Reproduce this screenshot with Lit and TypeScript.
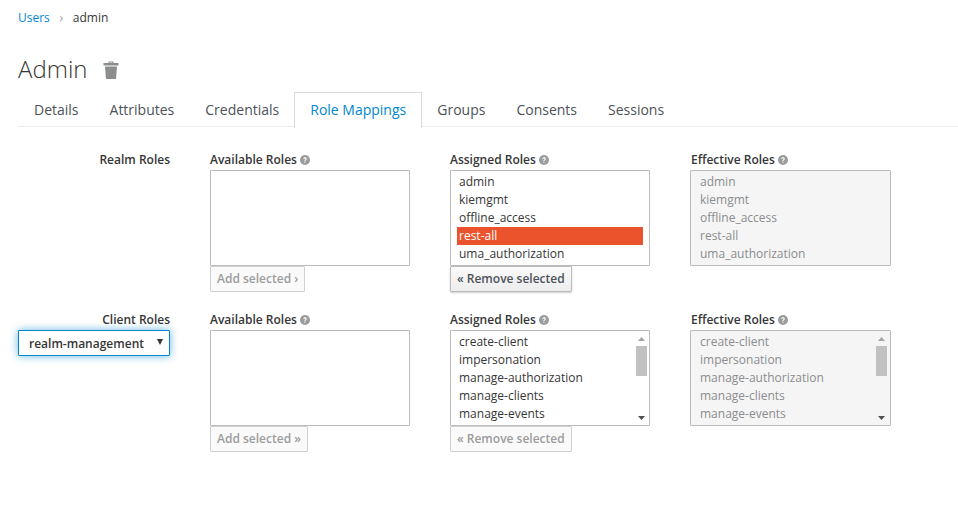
import { LitElement, css, html, nothing } from "lit";
import { customElement } from "lit/decorators.js";

const TABS = ["Details", "Attributes", "Credentials", "Role Mappings", "Groups", "Consents", "Sessions"];
const REALM = ["admin", "kiemgmt", "offline_access", "rest-all", "uma_authorization"];
const CLIENT = ["create-client", "impersonation", "manage-authorization", "manage-clients", "manage-events"];

@customElement("app-root")
export class AppRoot extends LitElement {
    static styles = css`
        :host {
            display: block;
            width: 958px;
            height: 518px;
            overflow: hidden;
            background: #fff;
            color: #363636;
            font-family: "Open Sans", sans-serif;
            font-size: 12px;
            line-height: 18px;
        }
        .crumbs {
            display: flex;
            align-items: center;
            height: 18px;
            padding: 9px 0 0 18px;
        }
        .crumbs a {
            color: #0088ce;
        }
        .crumbs .sep {
            width: 23px;
            text-align: center;
            color: #9c9c9c;
            font-size: 12px;
        }
        h1 {
            display: flex;
            align-items: center;
            margin: 0;
            padding: 24px 0 0 18px;
            height: 36px;
            font-size: 24px;
            font-weight: 300;
            line-height: 30px;
        }
        h1 svg {
            margin: 2px 0 0 15px;
        }
        .tabs {
            display: flex;
            height: 34px;
            margin: 5px 0 0 18px;
            padding-left: 0.5px;
            border-bottom: 1px solid #ededed;
        }
        .tab {
            padding: 8px 14.5px 0;
            height: 26px;
            font-size: 14px;
            color: #4d5258;
            border: 1px solid transparent;
            border-bottom: none;
        }
        .tab.active {
            color: #0088ce;
            background: #fff;
            border-color: #dcdcdc;
            height: 27px;
            margin: 0 0 -1px -0.5px;
            padding-left: 15px;
        }
        .row {
            display: flex;
            height: 160px;
            padding-left: 18px;
        }
        .rows {
            padding-top: 24px;
        }
        .side {
            width: 152px;
            margin-right: 40px;
        }
        .side label {
            display: block;
            text-align: right;
            font-weight: 600;
        }
        .select {
            display: flex;
            align-items: center;
            justify-content: space-between;
            box-sizing: border-box;
            height: 26px;
            margin-top: 1px;
            padding: 1px 6px 0 10px;
            background: #fff;
            border: 1px solid #0088ce;
            border-radius: 1px;
            box-shadow: 0 0 8px rgba(0, 136, 206, 0.6);
            font-size: 12px;
            font-weight: 600;
        }
        .caret {
            width: 0;
            height: 0;
            margin-top: -3px;
            border: 3.5px solid transparent;
            border-top: 6px solid #363636;
            border-bottom: none;
        }
        .col {
            width: 200px;
            margin-right: 40px;
        }
        .col.assigned {
            margin-right: 41px;
        }
        .title {
            display: flex;
            align-items: center;
            height: 18px;
            margin-bottom: 1px;
            font-weight: 600;
            white-space: nowrap;
        }
        .title svg {
            margin-left: 3px;
        }
        .box {
            display: flex;
            box-sizing: border-box;
            height: 96px;
            background: #fff;
            border: 1px solid #bbb;
            border-radius: 1px;
        }
        .box.off {
            margin-left: -1px;
            width: 201px;
            background: #f5f5f5;
            color: #8b8d8f;
        }
        .options {
            flex: 1;
            min-width: 0;
            padding: 2px 6px 0;
        }
        .off .options {
            padding-left: 7px;
        }
        .option {
            height: 18px;
            padding-left: 2px;
            white-space: nowrap;
        }
        .option.selected {
            background: #ea532b;
            color: #fff;
        }
        .scroll {
            display: flex;
            flex-direction: column;
            align-items: center;
            box-sizing: border-box;
            width: 14px;
            padding-right: 1px;
        }
        .off .scroll {
            padding-right: 3px;
        }
        .arrow {
            display: flex;
            align-items: center;
            justify-content: center;
            flex: none;
            height: 15px;
        }
        .thumb {
            width: 11px;
            height: 30px;
            flex: none;
            background: #c1c1c1;
        }
        .track {
            flex: 1;
        }
        button {
            display: block;
            box-sizing: border-box;
            height: 26px;
            padding: 0 6px;
            background: #fafafa;
            border: 1px solid #d1d1d1;
            border-radius: 1px;
            color: #9c9c9c;
            font: 600 12px/18px "Open Sans", sans-serif;
            white-space: nowrap;
        }
        button.on {
            color: #4d5258;
            background: linear-gradient(#fafafa, #ededed);
            border-color: #bbb;
            box-shadow: 0 1px 2px rgba(0, 0, 0, 0.2);
        }
    `;

    help() {
        return html`<svg width="10" height="10" viewBox="0 0 10 10">
            <circle cx="5" cy="5" r="5" fill="#9c9c9c"></circle>
            <path d="M3.3 3.9c0-1 .8-1.6 1.800-1.600s1.700.6 1.700 1.500c0 1.300-1.400 1.200-1.400 2.300H4.400c0-1.500 1.200-1.400 1.200-2.200 0-.3-.2-.6-.6-.6s-.6.3-.6.6zM4.400 6.600h1v1.100h-1z" fill="#fff"></path>
        </svg>`;
    }

    list(items: string[], opts: { off?: boolean; scroll?: boolean; selected?: string } = {}) {
        return html`<div class="box ${opts.off ? "off" : ""}">
            <div class="options">
                ${items.map((i) => html`<div class="option ${i === opts.selected ? "selected" : ""}">${i}</div>`)}
            </div>
            ${opts.scroll
                ? html`<div class="scroll">
                      <div class="arrow">
                          <svg width="7" height="4" viewBox="0 0 7 4"><path d="M3.500 0L7 4H0z" fill="#a3a3a3"></path></svg>
                      </div>
                      <div class="thumb"></div>
                      <div class="track"></div>
                      <div class="arrow">
                          <svg width="7" height="4" viewBox="0 0 7 4"><path d="M0 0h7L3.500 4z" fill="#505050"></path></svg>
                      </div>
                  </div>`
                : nothing}
        </div>`;
    }

    column(title: string, body: unknown, button?: unknown, cls = "") {
        return html`<div class="col ${cls}">
            <div class="title">${title}${this.help()}</div>
            ${body} ${button ?? nothing}
        </div>`;
    }

    render() {
        return html`
            <div class="crumbs">
                <a>Users</a>
                <span class="sep">›</span>
                <span>admin</span>
            </div>
            <h1>
                Admin
                <svg width="16" height="18" viewBox="0 0 16 18">
                    <path d="M5.500 2V.6h5V2h5v2.500H.5V2zM6.700 1.500V2h2.600v-.5z" fill="#8b8d8f"></path>
                    <path d="M2 5.500h12L13 18H3z" fill="#8b8d8f"></path>
                </svg>
            </h1>
            <div class="tabs">
                ${TABS.map((t) => html`<div class="tab ${t === "Role Mappings" ? "active" : ""}">${t}</div>`)}
            </div>
            <div class="rows">
                <div class="row">
                    <div class="side"><label>Realm Roles</label></div>
                    ${this.column("Available Roles", this.list([]), html`<button>Add selected ›</button>`)}
                    ${this.column(
                        "Assigned Roles",
                        this.list(REALM, { selected: "rest-all" }),
                        html`<button class="on">« Remove selected</button>`,
                        "assigned"
                    )}
                    ${this.column("Effective Roles", this.list(REALM, { off: true }))}
                </div>
                <div class="row">
                    <div class="side">
                        <label>Client Roles</label>
                        <div class="select"><span>realm-management</span><span class="caret"></span></div>
                    </div>
                    ${this.column("Available Roles", this.list([]), html`<button>Add selected »</button>`)}
                    ${this.column(
                        "Assigned Roles",
                        this.list(CLIENT, { scroll: true }),
                        html`<button>« Remove selected</button>`,
                        "assigned"
                    )}
                    ${this.column("Effective Roles", this.list(CLIENT, { off: true, scroll: true }))}
                </div>
            </div>
        `;
    }
}
